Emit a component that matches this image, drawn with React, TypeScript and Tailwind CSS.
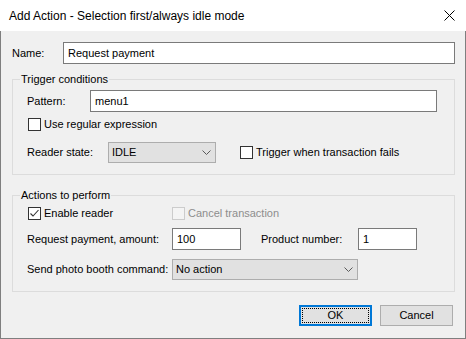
import React from "react";

function Checkbox({ checked = false, disabled = false }: { checked?: boolean; disabled?: boolean }) {
  return (
    <span
      className={`flex h-[13px] w-[13px] shrink-0 items-center justify-center border ${
        disabled ? "border-[#cccccc] bg-[#f4f4f4]" : "border-[#333333] bg-white"
      }`}
    >
      {checked && (
        <svg width="11" height="11" viewBox="0 0 11 11" fill="none">
          <path d="M1.5 5.5 L4 8 L9.5 2" stroke="#333" strokeWidth="1.1" />
        </svg>
      )}
    </span>
  );
}

function Select({ value, width }: { value: string; width: string }) {
  return (
    <div className={`flex h-[21px] ${width} items-center justify-between border border-[#adadad] bg-[#e1e1e1] pl-[3px] pr-[4px]`}>
      <span>{value}</span>
      <svg width="9" height="5" viewBox="0 0 9 5" fill="none">
        <path d="M0.5 0.5 L4.5 4.5 L8.5 0.5" stroke="#5a5a5a" strokeWidth="1" />
      </svg>
    </div>
  );
}

function TextBox({ value, width }: { value: string; width: string }) {
  return (
    <input
      readOnly
      value={value}
      className={`h-[22px] ${width} border border-[#7a7a7a] bg-white px-[4px] pb-[1px] text-[11px] text-black outline-none`}
    />
  );
}

export default function App() {
  return (
    <div
      className="flex h-[339px] w-[466px] flex-col text-[11px] text-black"
      style={{ fontFamily: '"Liberation Sans", Arial, sans-serif' }}
    >
      {/* Title bar */}
      <div className="flex h-[31px] items-center justify-between bg-white pl-[9px] pr-[11px]">
        <span className="text-[12px]">Add Action - Selection first/always idle mode</span>
        <svg width="11" height="11" viewBox="0 0 11 11" fill="none">
          <path d="M0.5 0.5 L10.5 10.5 M10.5 0.5 L0.5 10.5" stroke="#000" strokeWidth="1" />
        </svg>
      </div>

      {/* Body */}
      <div className="flex flex-1 flex-col border-x border-b border-[#7f7f7f] bg-[#f0f0f0] pl-[11px] pr-[10px] pt-[11px]">
        <div className="flex h-[22px] items-center">
          <span className="w-[51px]">Name:</span>
          <TextBox value="Request payment" width="flex-1" />
        </div>

        <fieldset className="mt-[7px] border border-[#dcdcdc] pb-[11px] pl-[7px]">
          <legend className="px-[1px] leading-[16px]">Trigger conditions</legend>
          <div className="ml-[7px] mt-[3px] flex h-[22px] items-center">
            <span className="w-[63px]">Pattern:</span>
            <TextBox value="menu1" width="w-[347px]" />
          </div>
          <div className="ml-[8px] mt-[6px] flex h-[13px] items-center gap-[3px]">
            <Checkbox />
            <span>Use regular expression</span>
          </div>
          <div className="ml-[7px] mt-[11px] flex h-[21px] items-center">
            <span className="w-[81px]">Reader state:</span>
            <Select value="IDLE" width="w-[108px]" />
            <div className="ml-[24px] flex items-center gap-[3px]">
              <Checkbox />
              <span>Trigger when transaction fails</span>
            </div>
          </div>
        </fieldset>

        <fieldset className="mt-[12px] border border-[#dcdcdc] pb-[11px] pl-[7px]">
          <legend className="px-[1px] leading-[16px]">Actions to perform</legend>
          <div className="ml-[7px] mt-[4px] flex h-[13px] items-center">
            <div className="flex w-[145px] items-center gap-[3px] pl-[1px]">
              <Checkbox checked />
              <span>Enable reader</span>
            </div>
            <div className="flex items-center gap-[3px]">
              <Checkbox disabled />
              <span className="text-[#8d8d8d]">Cancel transaction</span>
            </div>
          </div>
          <div className="ml-[7px] mt-[8px] flex h-[22px] items-center">
            <span className="w-[145px]">Request payment, amount:</span>
            <TextBox value="100" width="w-[69px]" />
            <span className="ml-[20px] w-[97px]">Product number:</span>
            <TextBox value="1" width="w-[59px]" />
          </div>
          <div className="ml-[7px] mt-[9px] flex h-[21px] items-center">
            <span className="w-[145px]">Send photo booth command:</span>
            <Select value="No action" width="w-[186px]" />
          </div>
        </fieldset>

        <div className="mr-[2px] mt-[13px] flex justify-end gap-[8px]">
          <button className="flex h-[21px] w-[73px] border-2 border-[#0078d7] bg-[#e1e1e1] p-[1px]">
            <span className="flex flex-1 items-center justify-center border border-dotted border-black">OK</span>
          </button>
          <button className="flex h-[21px] w-[73px] items-center justify-center border border-[#adadad] bg-[#e1e1e1]">
            Cancel
          </button>
        </div>
      </div>
    </div>
  );
}
